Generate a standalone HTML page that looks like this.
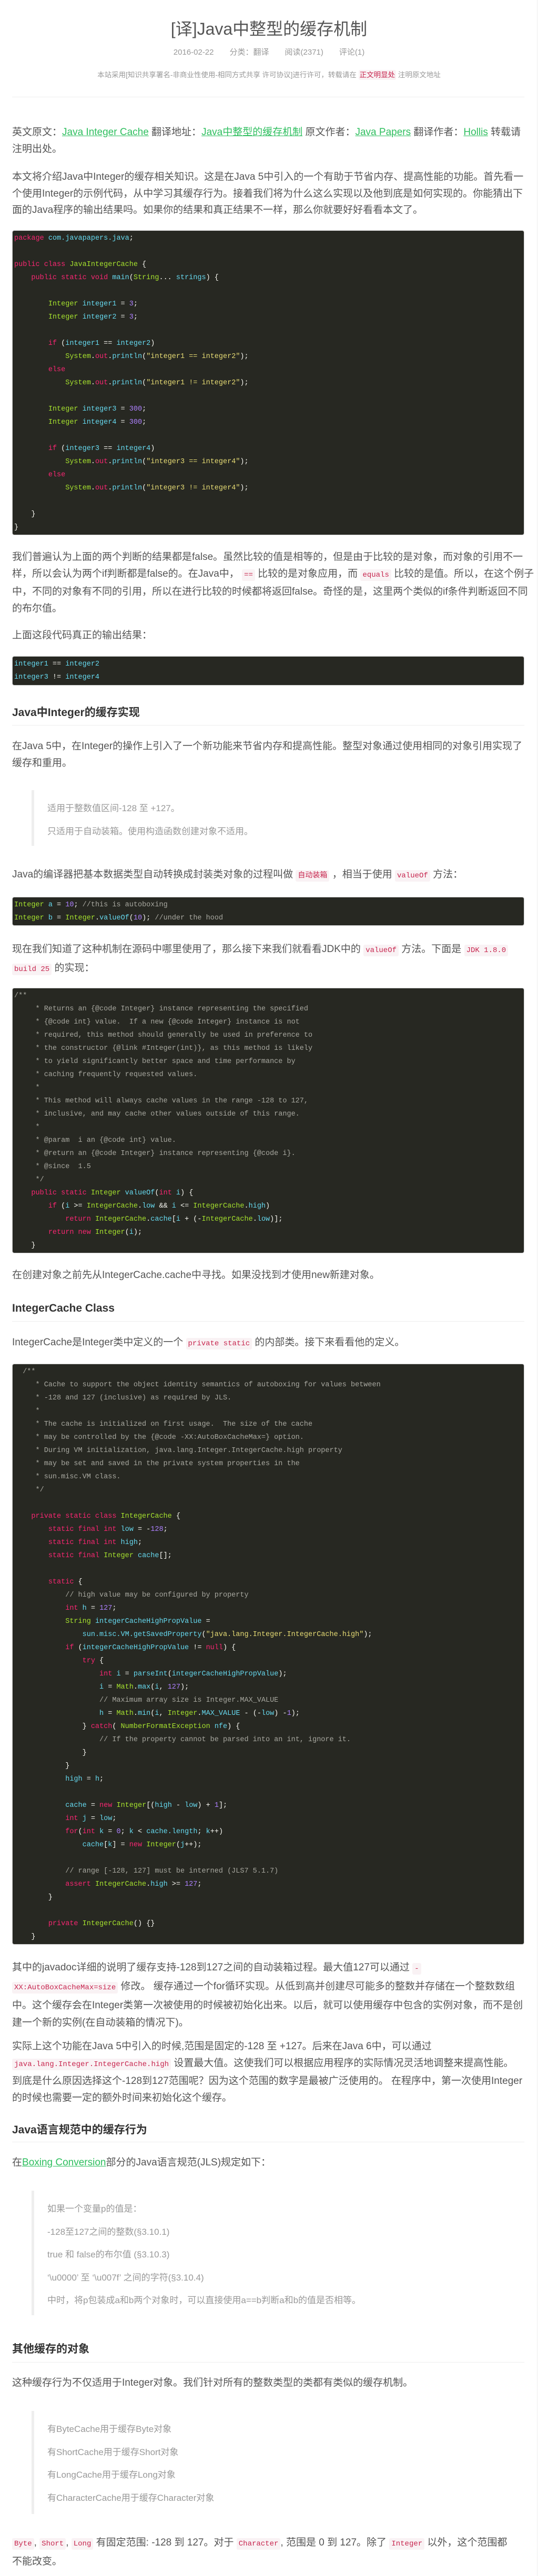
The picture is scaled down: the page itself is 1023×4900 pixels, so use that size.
<!DOCTYPE html>
<html><head><meta charset="utf-8"><style>
*{margin:0;padding:0;box-sizing:border-box}
body{width:1023px;height:4900px;background:#fff;position:relative;overflow:hidden;font-family:"Liberation Sans","Noto Sans CJK SC",sans-serif;color:#555}
.a{position:absolute;left:23px;width:974px;white-space:nowrap}
.p{font-size:19px;line-height:31.5px}
.p33{font-size:19px;line-height:33px}
a{color:#2fbf5f;text-decoration:underline}
code{font-family:"Liberation Mono",monospace;font-size:14px;color:#c7254e;background:#f9f2f4;padding:3px 4px;border-radius:3px}
pre{position:absolute;left:23px;width:974px;background:#272822;border:1px solid #ccc;border-radius:4px;padding:2px 3px;font-family:"Liberation Mono",monospace;font-size:13.5px;line-height:25px;color:#f8f8f2;overflow:hidden}
.k{color:#f92672}.g{color:#a6e22e}.b{color:#66d9ef}.n{color:#ae81ff}.s{color:#e6db74}.c{color:#a8a8a0}
h2{position:absolute;left:23px;width:974px;font-size:21px;font-weight:bold;color:#333;line-height:30px;border-bottom:1px solid #eee}
.bq{position:absolute;left:60px;width:937px;border-left:5px solid #eee;padding-left:25px;font-size:17px;color:#999;line-height:43.5px;white-space:nowrap}
</style></head><body>
<div style="position:absolute;right:1px;top:0;width:1px;height:4900px;background:#eee"></div>

<div style="position:absolute;top:35px;left:0;width:1023px;text-align:center;font-size:32px;line-height:40px;color:#555">[译]Java中整型的缓存机制</div>
<div style="position:absolute;top:90px;left:0;width:1023px;text-align:center;font-size:15px;line-height:20px;color:#999;word-spacing:0">2016-02-22<span style="margin-left:30px">分类：翻译</span><span style="margin-left:30px">阅读(2371)</span><span style="margin-left:30px">评论(1)</span></div>
<div style="position:absolute;top:133px;left:0;width:1023px;text-align:center;font-size:13.5px;line-height:20px;color:#999">本站采用[知识共享署名-非商业性使用-相同方式共享 许可协议]进行许可，转载请在 <span style="color:#c7254e;background:#f9f2f4;padding:2px 2px;border-radius:3px">正文明显处</span> 注明原文地址</div>
<div style="position:absolute;top:184px;left:23px;width:974px;height:1px;background:#eee"></div>

<div class="a p" style="top:236px">英文原文：<a>Java Integer Cache</a> 翻译地址：<a>Java中整型的缓存机制</a> 原文作者：<a>Java Papers</a> 翻译作者：<a>Hollis</a> 转载请<br>注明出处。</div>

<div class="a p" style="top:321px">本文将介绍Java中Integer的缓存相关知识。这是在Java 5中引入的一个有助于节省内存、提高性能的功能。首先看一<br>个使用Integer的示例代码，从中学习其缓存行为。接着我们将为什么这么实现以及他到底是如何实现的。你能猜出下<br>面的Java程序的输出结果吗。如果你的结果和真正结果不一样，那么你就要好好看看本文了。</div>

<pre style="top:438px;height:580px"><span class="k">package</span> <span class="b">com.javapapers.java</span>;

<span class="k">public class</span> <span class="g">JavaIntegerCache</span> {
    <span class="k">public static void</span> <span class="b">main</span>(<span class="g">String</span>... <span class="b">strings</span>) {

        <span class="g">Integer</span> <span class="b">integer1</span> = <span class="n">3</span>;
        <span class="g">Integer</span> <span class="b">integer2</span> = <span class="n">3</span>;

        <span class="k">if</span> (<span class="b">integer1</span> == <span class="b">integer2</span>)
            <span class="g">System</span>.<span class="k">out</span>.<span class="b">println</span>(<span class="s">"integer1 == integer2"</span>);
        <span class="k">else</span>
            <span class="g">System</span>.<span class="k">out</span>.<span class="b">println</span>(<span class="s">"integer1 != integer2"</span>);

        <span class="g">Integer</span> <span class="b">integer3</span> = <span class="n">300</span>;
        <span class="g">Integer</span> <span class="b">integer4</span> = <span class="n">300</span>;

        <span class="k">if</span> (<span class="b">integer3</span> == <span class="b">integer4</span>)
            <span class="g">System</span>.<span class="k">out</span>.<span class="b">println</span>(<span class="s">"integer3 == integer4"</span>);
        <span class="k">else</span>
            <span class="g">System</span>.<span class="k">out</span>.<span class="b">println</span>(<span class="s">"integer3 != integer4"</span>);

    }
}</pre>

<div class="a p" style="top:1044px">我们普遍认为上面的两个判断的结果都是false。虽然比较的值是相等的，但是由于比较的是对象，而对象的引用不一<br>样，所以会认为两个if判断都是false的。在Java中， <code>==</code> 比较的是对象应用，而 <code>equals</code> 比较的是值。所以，在这个例子<br>中，不同的对象有不同的引用，所以在进行比较的时候都将返回false。奇怪的是，这里两个类似的if条件判断返回不同<br>的布尔值。</div>

<div class="a p" style="top:1193px">上面这段代码真正的输出结果：</div>

<pre style="top:1248px;height:56px"><span class="b">integer1</span> == <span class="b">integer2</span>
<span class="b">integer3</span> != <span class="b">integer4</span></pre>

<h2 style="top:1341px;height:39px">Java中Integer的缓存实现</h2>

<div class="a p" style="top:1404px">在Java 5中，在Integer的操作上引入了一个新功能来节省内存和提高性能。整型对象通过使用相同的对象引用实现了<br>缓存和重用。</div>

<div class="bq" style="top:1503px;height:106px;padding-top:13px">适用于整数值区间-128 至 +127。<br>只适用于自动装箱。使用构造函数创建对象不适用。</div>

<div class="a p33" style="top:1647px">Java的编译器把基本数据类型自动转换成封装类对象的过程叫做 <code>自动装箱</code> ，相当于使用 <code>valueOf</code> 方法：</div>

<pre style="top:1706px;height:55px"><span class="g">Integer</span> <span class="b">a</span> = <span class="n">10</span>; <span class="c">//this is autoboxing</span>
<span class="g">Integer</span> <span class="b">b</span> = <span class="g">Integer</span>.<span class="b">valueOf</span>(<span class="n">10</span>); <span class="c">//under the hood</span></pre>

<div class="a p33" style="top:1789px">现在我们知道了这种机制在源码中哪里使用了，那么接下来我们就看看JDK中的 <code>valueOf</code> 方法。下面是 <code>JDK 1.8.0</code><br><code>build 25</code> 的实现：</div>

<pre style="top:1879px;height:505px"><span class="c">/**
     * Returns an {@code Integer} instance representing the specified
     * {@code int} value.  If a new {@code Integer} instance is not
     * required, this method should generally be used in preference to
     * the constructor {@link #Integer(int)}, as this method is likely
     * to yield significantly better space and time performance by
     * caching frequently requested values.
     *
     * This method will always cache values in the range -128 to 127,
     * inclusive, and may cache other values outside of this range.
     *
     * @param  i an {@code int} value.
     * @return an {@code Integer} instance representing {@code i}.
     * @since  1.5
     */</span>
    <span class="k">public static</span> <span class="g">Integer</span> <span class="b">valueOf</span>(<span class="k">int</span> <span class="b">i</span>) {
        <span class="k">if</span> (<span class="b">i</span> &gt;= <span class="g">IntegerCache</span>.<span class="b">low</span> &amp;&amp; <span class="b">i</span> &lt;= <span class="g">IntegerCache</span>.<span class="b">high</span>)
            <span class="k">return</span> <span class="g">IntegerCache</span>.<span class="b">cache</span>[<span class="b">i</span> + (-<span class="g">IntegerCache</span>.<span class="b">low</span>)];
        <span class="k">return new</span> <span class="g">Integer</span>(<span class="b">i</span>);
    }</pre>

<div class="a p" style="top:2410px">在创建对象之前先从IntegerCache.cache中寻找。如果没找到才使用new新建对象。</div>

<h2 style="top:2474px;height:40px">IntegerCache Class</h2>

<div class="a p33" style="top:2537px">IntegerCache是Integer类中定义的一个 <code>private static</code> 的内部类。接下来看看他的定义。</div>

<pre style="top:2594px;height:1105px"><span class="c">  /**
     * Cache to support the object identity semantics of autoboxing for values between
     * -128 and 127 (inclusive) as required by JLS.
     *
     * The cache is initialized on first usage.  The size of the cache
     * may be controlled by the {@code -XX:AutoBoxCacheMax=} option.
     * During VM initialization, java.lang.Integer.IntegerCache.high property
     * may be set and saved in the private system properties in the
     * sun.misc.VM class.
     */</span>

    <span class="k">private static class</span> <span class="g">IntegerCache</span> {
        <span class="k">static final int</span> <span class="b">low</span> = -<span class="n">128</span>;
        <span class="k">static final int</span> <span class="b">high</span>;
        <span class="k">static final</span> <span class="g">Integer</span> <span class="b">cache</span>[];

        <span class="k">static</span> {
            <span class="c">// high value may be configured by property</span>
            <span class="k">int</span> <span class="b">h</span> = <span class="n">127</span>;
            <span class="g">String</span> <span class="b">integerCacheHighPropValue</span> =
                <span class="b">sun.misc.VM.getSavedProperty</span>(<span class="s">"java.lang.Integer.IntegerCache.high"</span>);
            <span class="k">if</span> (<span class="b">integerCacheHighPropValue</span> != <span class="k">null</span>) {
                <span class="k">try</span> {
                    <span class="k">int</span> <span class="b">i</span> = <span class="b">parseInt</span>(<span class="b">integerCacheHighPropValue</span>);
                    <span class="b">i</span> = <span class="g">Math</span>.<span class="b">max</span>(<span class="b">i</span>, <span class="n">127</span>);
                    <span class="c">// Maximum array size is Integer.MAX_VALUE</span>
                    <span class="b">h</span> = <span class="g">Math</span>.<span class="b">min</span>(<span class="b">i</span>, <span class="g">Integer</span>.<span class="b">MAX_VALUE</span> - (-<span class="b">low</span>) -<span class="n">1</span>);
                } <span class="k">catch</span>( <span class="g">NumberFormatException</span> <span class="b">nfe</span>) {
                    <span class="c">// If the property cannot be parsed into an int, ignore it.</span>
                }
            }
            <span class="b">high</span> = <span class="b">h</span>;

            <span class="b">cache</span> = <span class="k">new</span> <span class="g">Integer</span>[(<span class="b">high</span> - <span class="b">low</span>) + <span class="n">1</span>];
            <span class="k">int</span> <span class="b">j</span> = <span class="b">low</span>;
            <span class="k">for</span>(<span class="k">int</span> <span class="b">k</span> = <span class="n">0</span>; <span class="b">k</span> &lt; <span class="b">cache.length</span>; <span class="b">k</span>++)
                <span class="b">cache</span>[<span class="b">k</span>] = <span class="k">new</span> <span class="g">Integer</span>(<span class="b">j</span>++);

            <span class="c">// range [-128, 127] must be interned (JLS7 5.1.7)</span>
            <span class="k">assert</span> <span class="g">IntegerCache</span>.<span class="b">high</span> &gt;= <span class="n">127</span>;
        }

        <span class="k">private</span> <span class="g">IntegerCache</span>() {}
    }</pre>

<div class="a p33" style="top:3726px">其中的javadoc详细的说明了缓存支持-128到127之间的自动装箱过程。最大值127可以通过 <code>-</code><br><code>XX:AutoBoxCacheMax=size</code> 修改。 缓存通过一个for循环实现。从低到高并创建尽可能多的整数并存储在一个整数数组<br>中。这个缓存会在Integer类第一次被使用的时候被初始化出来。以后，就可以使用缓存中包含的实例对象，而不是创<br>建一个新的实例(在自动装箱的情况下)。</div>

<div class="a" style="top:3877px;font-size:19px;line-height:31.5px">实际上这个功能在Java 5中引入的时候,范围是固定的-128 至 +127。后来在Java 6中，可以通过<br><code>java.lang.Integer.IntegerCache.high</code> 设置最大值。这使我们可以根据应用程序的实际情况灵活地调整来提高性能。<br>到底是什么原因选择这个-128到127范围呢？因为这个范围的数字是最被广泛使用的。 在程序中，第一次使用Integer<br>的时候也需要一定的额外时间来初始化这个缓存。</div>

<h2 style="top:4037px;height:38px">Java语言规范中的缓存行为</h2>

<div class="a p" style="top:4098px">在<a>Boxing Conversion</a>部分的Java语言规范(JLS)规定如下：</div>

<div class="bq" style="top:4167px;height:237px;padding-top:13px">如果一个变量p的值是：<br>-128至127之间的整数(§3.10.1)<br>true 和 false的布尔值 (§3.10.3)<br>‘\u0000’ 至 ‘\u007f’ 之间的字符(§3.10.4)<br>中时，将p包装成a和b两个对象时，可以直接使用a==b判断a和b的值是否相等。</div>

<h2 style="top:4454px;height:40px">其他缓存的对象</h2>

<div class="a p" style="top:4517px">这种缓存行为不仅适用于Integer对象。我们针对所有的整数类型的类都有类似的缓存机制。</div>

<div class="bq" style="top:4586px;height:196px;padding-top:13px">有ByteCache用于缓存Byte对象<br>有ShortCache用于缓存Short对象<br>有LongCache用于缓存Long对象<br>有CharacterCache用于缓存Character对象</div>

<div class="a p33" style="top:4820px"><code>Byte</code>, <code>Short</code>, <code>Long</code> 有固定范围: -128 到 127。对于 <code>Character</code>, 范围是 0 到 127。除了 <code>Integer</code> 以外，这个范围都<br>不能改变。</div>

</body></html>
